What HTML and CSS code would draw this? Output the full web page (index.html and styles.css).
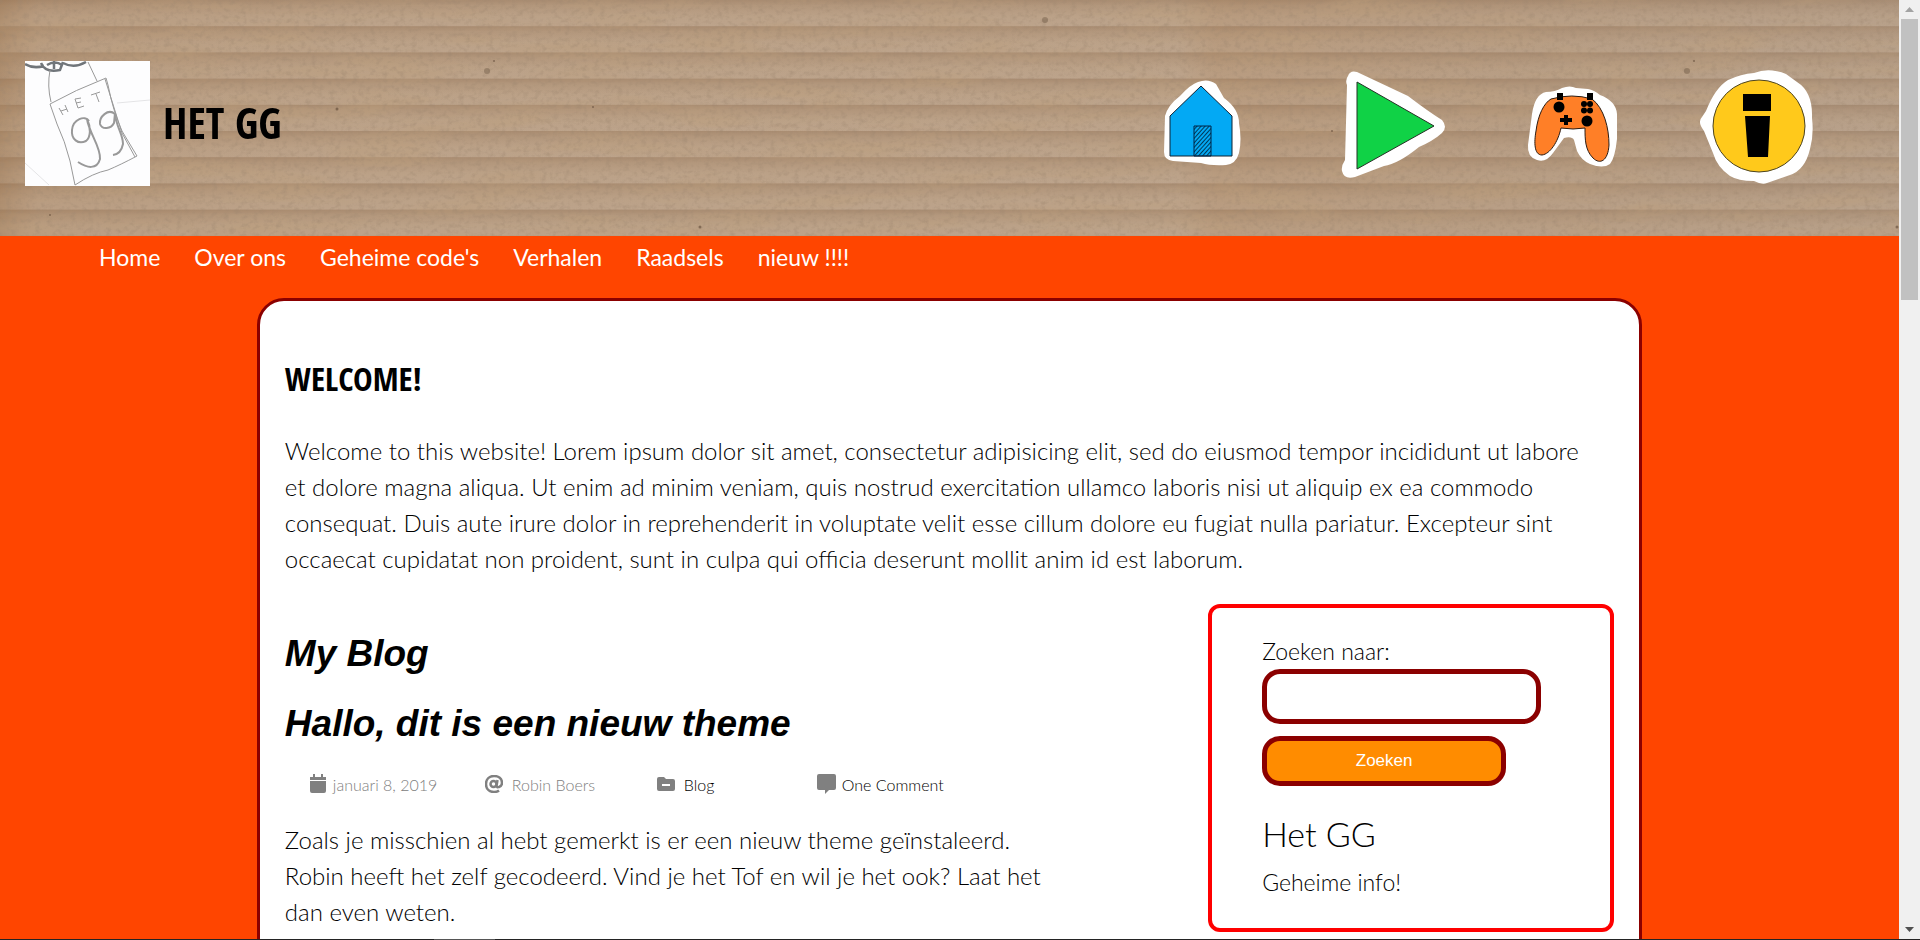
FILE: index.html
```html
<!DOCTYPE html>
<html lang="nl">
<head>
<meta charset="utf-8">
<title>Het GG</title>
<link rel="stylesheet" href="styles.css">
</head>
<body>
<div class="viewport">
  <div class="page">
    <header class="header">
      <svg class="cardboard" width="100%" height="100%" aria-hidden="true">
        <defs>
          <linearGradient id="ridge" x1="0" y1="0" x2="0" y2="1">
            <stop offset="0" stop-color="#a88c72"/>
            <stop offset=".2" stop-color="#b3987e"/>
            <stop offset=".6" stop-color="#bca38a"/>
            <stop offset="1" stop-color="#bda58e"/>
          </linearGradient>
          <pattern id="ridges" width="100" height="26.2" patternUnits="userSpaceOnUse">
            <rect width="100" height="27" fill="url(#ridge)"/>
          </pattern>
          <linearGradient id="shade">
            <stop offset="0" stop-color="#8a5a2c" stop-opacity=".3"/>
            <stop offset=".02" stop-color="#a06a38" stop-opacity=".12"/>
            <stop offset=".2" stop-color="#b08050" stop-opacity=".05"/>
            <stop offset=".62" stop-color="#a06a38" stop-opacity=".02"/>
            <stop offset=".64" stop-color="#a06a38" stop-opacity=".14"/>
            <stop offset="1" stop-color="#8c8078" stop-opacity=".1"/>
          </linearGradient>
          <filter id="grain" x="0" y="0" width="100%" height="100%">
            <feTurbulence type="fractalNoise" baseFrequency=".17 .21" numOctaves="4" seed="4"/>
            <feColorMatrix values="0 0 0 0 .34  0 0 0 0 .24  0 0 0 0 .16  1 0 0 0 -.45"/>
          </filter>
          <filter id="streaks" x="0" y="0" width="100%" height="100%">
            <feTurbulence type="fractalNoise" baseFrequency=".009 .05" numOctaves="4" seed="9"/>
            <feColorMatrix values="0 0 0 0 .5  0 0 0 0 .34  0 0 0 0 .2  1.3 0 0 0 -.58"/>
          </filter>
        </defs>
        <rect width="100%" height="100%" fill="url(#ridges)"/>
        <rect width="100%" height="100%" fill="url(#shade)"/>
        <rect width="100%" height="100%" filter="url(#streaks)"/>
        <rect width="100%" height="100%" filter="url(#grain)"/>
        <g fill="#5e4936" opacity=".6">
          <circle cx="487" cy="71" r="3" opacity=".6"/><circle cx="494" cy="61" r="1"/><circle cx="337" cy="109" r="1.500"/>
          <circle cx="593" cy="107" r="1"/><circle cx="50" cy="215" r="1"/><circle cx="1045" cy="20" r="3" opacity=".6"/>
          <circle cx="1332" cy="131" r="1"/><circle cx="700" cy="227" r="1.500"/><circle cx="1687" cy="71" r="3" opacity=".6"/>
          <circle cx="1694" cy="61" r="1"/><circle cx="1897" cy="227" r="1.500"/>
        </g>
      </svg>
      <a class="brand" href="#">
        <svg class="logo" viewBox="0 0 125 125" fill="none" stroke="#999" role="img" aria-label="Het GG logo">
          <rect width="125" height="125" fill="#fdfdfe" stroke="none"/>
          <g stroke="#70757a" stroke-width="2.500"><path d="M0 3Q8 8 19 5M16 2Q20 12 35 9L38 1M22 4Q30 -1 37 4M38 2Q49 8 61 1M29 0V8"/></g>
          <path d="M25 9Q22 25 26 41M63 1L72 20M25 43Q50 29 81 17L83 24Q88 50 97 70L112 95Q95 104 83 109Q68 112 50 124L45 100Q40 80 32 63L25 43M80 18L97 72L110 96"/>
          <path stroke="#e4e4e6" d="M0 102L24 124M92 42L125 39"/>
          <path stroke-width="2" d="M64 60C60 54 48 58 47 69C46 78 53 84 61 80C66 76 66 66 62 58C64 72 76 86 75 98C72 109 62 107 53 101M90 53C83 47 74 56 75 63C77 69 86 68 89 62L90 52C91 66 98 73 98 83Q96 93 88 94"/>
          <path d="M34 47L38 54M40 44L43 51M36 50L42 48M50 38L53 47L59 45M50 38L56 37M51 42L56 41M66 34L75 31M71 33L74 41"/>
        </svg>
        <span class="site-title">HET GG</span>
      </a>
      <nav class="stickers" aria-label="Snelkoppelingen">
        <a class="home" href="#" aria-label="Home"><svg width="80" height="98" viewBox="0 0 80 98">
          <defs><pattern id="hatch" width="3" height="3" patternUnits="userSpaceOnUse" patternTransform="rotate(42)"><path d="M0 0V3" stroke="#012b45" stroke-width="1.800"/></pattern></defs>
          <path fill="#fff" d="M35 4Q45 0 53 6L61 20Q76 31 76 45Q79 62 76 75Q73 86 63 87Q48 88 38 85L10 83Q1 82 1 74L2 38Q5 27 17 18Q28 6 35 4Z"/>
          <path fill="#03a9f4" stroke="#123" d="M38 8L69 38V78H7V38Z"/>
          <path fill="url(#hatch)" stroke="#024" d="M31 48H48V78H31Z"/></svg></a>
        <a href="#" aria-label="Afspelen"><svg width="106" height="114" viewBox="0 0 106 114">
          <path fill="#fff" d="M7 6Q9 0 16 2L67 26Q88 42 101 50Q107 57 101 63Q92 71 78 77Q57 94 43 96L14 107Q3 110 1 101Q0 96 4 90L6 15Q4 10 7 6Z"/>
          <path fill="#10d246" stroke="#253025" d="M16 12L93 56L16 99Z"/></svg></a>
        <a href="#" aria-label="Spellen"><svg width="92" height="84" viewBox="0 0 92 84">
          <path fill="#fff" d="M35 3Q43 0 49 3L61 4Q67 5 73 10Q89 16 90 29V54Q88 73 83 79Q76 84 63 79Q54 75 50 66L47 55Q45 51 37 53L26 68Q19 78 10 75Q0 72 1 60L5 29Q8 9 19 7Q28 7 35 3Z"/>
          <path fill="#ff7f27" stroke="#2a1b12" d="M24 14Q45 8 65 14C77 23 82 43 82 60C81 76 73 80 66 73C58 65 58 54 58 43Q46 45 34 43C31 57 23 69 15 70C7 70 7 57 9 46C11 30 17 18 24 14Z"/>
          <g fill="#000"><path d="M30 8h6v7h-6zM60 8h6v7h-6zM37 30h4v3h4v4h-4v3h-4v-3h-4v-4h4z"/><circle cx="32" cy="22" r="5.500"/><circle cx="60" cy="36" r="5.500"/><circle cx="57" cy="19" r="3"/><circle cx="63" cy="19" r="3"/><circle cx="57" cy="25.500" r="3"/><circle cx="63" cy="25.500" r="3"/></g></svg></a>
        <a href="#" aria-label="Informatie"><svg width="116" height="118" viewBox="0 0 116 118">
          <path fill="#fff" d="M55 5Q70 -1 87 6L98 14Q114 24 113 50Q115 67 111 81Q106 102 91 107L68 115Q63 117 55 113Q39 113 31 108Q18 99 14 85L5 63Q-2 54 3 49L7 43Q16 20 29 12Q42 6 55 5Z"/>
          <circle cx="60" cy="58" r="46" fill="#ffc91b" stroke="#4b4320"/>
          <path d="M44 26H72V43H44ZM46 48H71L69 89H49Z"/></svg></a>
      </nav>
    </header>

    <nav class="menu" aria-label="Hoofdmenu">
      <a href="#">Home</a><a href="#">Over ons</a><a href="#">Geheime code's</a><a href="#">Verhalen</a><a href="#">Raadsels</a><a href="#">nieuw !!!!</a>
    </nav>

    <main class="card">
      <h1 class="welcome">WELCOME!</h1>
      <p class="text">Welcome to this website! Lorem ipsum dolor sit amet, consectetur adipisicing elit, sed do eiusmod tempor incididunt ut labore<br>et dolore magna aliqua. Ut enim ad minim veniam, quis nostrud exercitation ullamco laboris nisi ut aliquip ex ea commodo<br>consequat. Duis aute irure dolor in reprehenderit in voluptate velit esse cillum dolore eu fugiat nulla pariatur. Excepteur sint<br>occaecat cupidatat non proident, sunt in culpa qui officia deserunt mollit anim id est laborum.</p>
      <div class="columns">
        <section class="blog">
          <h2 class="heading">My Blog</h2>
          <article>
            <h2 class="heading post-title">Hallo, dit is een nieuw theme</h2>
            <div class="meta">
              <span><svg width="18" height="20" viewBox="0 0 18 20"><path d="M1 3h3V0h2v3h6V0h2v3h3v3H1zM1 7h16v10q0 2-2 2H3q-2 0-2-2z"/></svg>januari 8, 2019</span>
              <span class="author"><svg width="18" height="18" viewBox="0 0 18 18" fill="none" stroke="currentColor" stroke-width="2.500"><circle cx="8.500" cy="9" r="3"/><path d="M12.500 5L11.500 11Q12 13 14 12Q17 11 17 8C17 3.500 13.500 1 9 1C4 1 1 4.500 1 9C1 14 4.500 17 9 17Q12 17 14 15.500"/></svg>Robin Boers</span>
              <span class="category"><svg width="18" height="16" viewBox="0 0 18 16"><path fill-rule="evenodd" d="M2 1h5l2 2h7q2 0 2 2v8q0 2-2 2H2q-2 0-2-2V3q0-2 2-2zM5 8v2h8V8z"/></svg><a href="#">Blog</a></span>
              <span><svg width="19" height="20" viewBox="0 0 19 20"><path d="M2 0h15q2 0 2 2v12q0 2-2 2h-5l-4 4v-4H2q-2 0-2-2V2q0-2 2-2z"/></svg><a href="#">One Comment</a></span>
            </div>
            <p class="text">Zoals je misschien al hebt gemerkt is er een nieuw theme geïnstaleerd.<br>Robin heeft het zelf gecodeerd. Vind je het Tof en wil je het ook? Laat het<br>dan even weten.</p>
          </article>
        </section>
        <aside class="sidebar">
          <form class="search">
            <label for="s">Zoeken naar:</label>
            <input id="s" type="text">
            <button type="button">Zoeken</button>
          </form>
          <h3 class="widget-title">Het GG</h3>
          <p class="widget-text">Geheime info!</p>
        </aside>
      </div>
    </main>
  </div>
  <div class="scrollbar" aria-hidden="true">
    <svg width="9" height="5"><path d="M0 5L4.500 0L9 5Z" fill="#a3a3a3"/></svg>
    <div class="thumb"></div>
    <svg width="9" height="5"><path d="M0 0L4.500 5L9 0Z" fill="#505050"/></svg>
  </div>
</div>
<div class="edge"><div class="edge-light"></div></div>
</body>
</html>
```
FILE: styles.css
```css
* { box-sizing: border-box; }
body {
  margin: 0;
  height: 100vh;
  overflow: hidden;
  display: flex;
  flex-direction: column;
  background: orangered;
  color: #000;
  font-family: Lato, "Liberation Sans", sans-serif;
  font-size: 23px;
  font-weight: 300;
}
a { color: inherit; text-decoration: none; }
.viewport { flex: 1; min-height: 0; display: flex; }
.page { flex: 1; min-width: 0; overflow: hidden; }

.header {
  position: relative;
  height: 236px;
  padding: 10px 84px 0 25px;
  display: flex;
  align-items: center;
  justify-content: space-between;
}
.cardboard { position: absolute; inset: 0; }
.brand { position: relative; display: flex; align-items: center; gap: 13px; }
.logo { width: 125px; height: 125px; }
.logo, .stickers svg { display: block; }
.site-title { font: bold 43px/48px "Open Sans Condensed", "Liberation Sans Narrow", "Liberation Sans", sans-serif; }
.stickers { position: relative; display: flex; align-items: center; gap: 80px; padding-top: 8px; }
.home { margin-right: 18px; }

.menu { display: flex; gap: 34px; padding: 0 99px; height: 62px; line-height: 43px; color: #fff; font-weight: 400; }

.card {
  width: calc(70% + 56px);
  height: 1200px;
  margin: 0 auto;
  padding: 54px 25px;
  background: #fff;
  border: 3px solid darkred;
  border-radius: 27px;
}
.welcome { margin: 0 0 30px; font: bold 33px/48px "Open Sans Condensed", "Liberation Sans Narrow", "Liberation Sans", sans-serif; }
.text { margin: 0; font-size: 24px; line-height: 36px; white-space: nowrap; }
.columns { display: flex; justify-content: space-between; align-items: flex-start; padding-top: 27px; }
.blog { padding-top: 26px; }
.heading { margin: 0; font: italic bold 37px/48px "Liberation Sans", Arial, sans-serif; }
.post-title { margin-top: 22px; }
.meta {
  display: grid;
  grid-template-columns: 176px 172px 160px auto;
  align-items: center;
  margin: 24px 0 26px;
  padding-left: 24px;
  height: 24px;
  color: #808080;
  font-size: 16px;
}
.meta span { display: flex; align-items: center; gap: 6px; }
.meta .author, .meta .category { gap: 9px; }
.meta svg { fill: currentColor; }
.meta .author svg { fill: none; }
.meta a { color: #000; }

.sidebar { width: 406px; padding: 26px 50px 28px; border: 4px solid red; border-radius: 12px; }
.search { display: flex; flex-direction: column; align-items: flex-start; }
.search label { line-height: 35px; }
.search input { width: 279px; height: 55px; padding: 0 18px; border: 5px solid darkred; border-radius: 18px; background: #fff; }
.search button {
  width: 244px; height: 50px; margin-top: 12px;
  border: 5px solid darkred; border-radius: 18px;
  background: darkorange; color: #fff;
  font: 17px "Liberation Sans", Arial, sans-serif;
}
.widget-title { margin: 24px 0 0; font-size: 34px; line-height: 48px; font-weight: 300; }
.widget-text { margin: 6px 0 0; line-height: 36px; }

.scrollbar { width: 21px; padding: 7px 2px; background: #f0f0f0; display: flex; flex-direction: column; align-items: center; }
.thumb { width: 17px; height: 281px; margin: 7px 0 auto; background: #c1c1c1; }
.edge { height: 1px; padding-left: 434px; background: #232323; }
.edge-light { width: 61px; height: 1px; background: #555; }
```
